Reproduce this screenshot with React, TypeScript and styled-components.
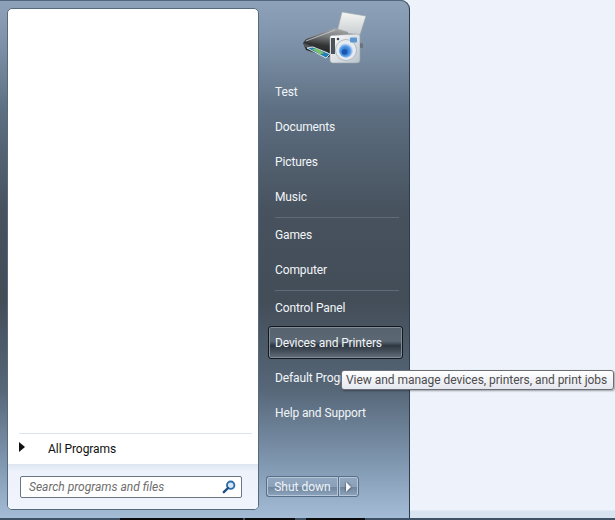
import React from "react";
import styled, { createGlobalStyle } from "styled-components";

const Global = createGlobalStyle`
  html, body { margin: 0; padding: 0; width: 615px; height: 520px; overflow: hidden; background: #edf2fb; }
  body { font-family: Roboto, "Noto Sans", sans-serif; font-size: 12px; }
`;

const Page = styled.div`
  width: 615px;
  height: 520px;
  display: flex;
  flex-direction: column;
  position: relative;
  overflow: hidden;
`;

const Desktop = styled.div`
  height: 518px;
  display: flex;
  background: linear-gradient(#edf2fb 0, #edf2fb 510px, #d9e4f1 511px, #d9e4f1 100%);
`;

const TaskStrip = styled.div`
  height: 2px;
  background: #3f5266;
  display: flex;
  padding-left: 120px;
  gap: 2px;
`;

const StripPiece = styled.div<{ $w: number; $gap?: number }>`
  width: ${(p) => p.$w}px;
  margin-right: ${(p) => p.$gap ?? 0}px;
  height: 2px;
  background: #0c0c0c;
`;

const Menu = styled.div`
  width: 410px;
  height: 518px;
  box-sizing: border-box;
  border-right: 1px solid #2c3d50;
  border-top-right-radius: 9px;
  padding: 8px 0 8px 7px;
  display: flex;
  box-shadow: inset 0 1px 0 #55677a;
  background: linear-gradient(#8ea3ba 0, #7f94ab 40px, #5d6f82 110px, #47525e 210px, #434d58 300px, #566778 390px, #7e95ae 460px, #a5bcd7 518px);
`;

const LeftPanel = styled.div`
  width: 252px;
  box-sizing: border-box;
  border: 1px solid #56697d;
  border-radius: 5px;
  background: #fff;
  display: flex;
  flex-direction: column;
  overflow: hidden;
`;

const ProgramList = styled.div`
  flex: 1;
`;

const AllPrograms = styled.div`
  margin: 0 6px 0 11px;
  height: 31px;
  border-top: 1px solid #dbe4ee;
  display: flex;
  align-items: center;
  color: #111;
  padding-left: 29px;
  position: relative;
  box-sizing: border-box;
  letter-spacing: -0.05px;
`;

const Arrow = styled.span`
  position: absolute;
  left: 0;
  top: 8px;
  width: 0;
  height: 0;
  border-left: 6px solid #111;
  border-top: 5.5px solid transparent;
  border-bottom: 5.5px solid transparent;
`;

const SearchArea = styled.div`
  height: 45px;
  box-sizing: border-box;
  padding: 12px 16px 0 12px;
  background: linear-gradient(#dde6f1 0, #eef3fb 8px, #f0f4fc 100%);
`;

const SearchBox = styled.div`
  height: 22px;
  box-sizing: border-box;
  border: 1px solid #6a7683;
  border-radius: 2px;
  background: #fff;
  display: flex;
  align-items: center;
  justify-content: space-between;
  padding: 0 5px 0 8px;
  color: #6d6d6d;
  font-style: italic;
`;

const RightColumn = styled.div`
  flex: 1;
  display: flex;
  flex-direction: column;
  padding: 0 6px 0 10px;
  color: #f2f5f8;
`;

const Picture = styled.div`
  height: 68px;
  padding-left: 33px;
  flex-shrink: 0;
`;

const Items = styled.div`
  display: flex;
  flex-direction: column;
  letter-spacing: -0.12px;
`;

const Item = styled.div<{ $active?: boolean }>`
  height: 31px;
  margin-bottom: 4px;
  display: flex;
  align-items: center;
  padding-left: 6px;
  box-sizing: border-box;
  border-radius: 3px;
  ${(p) =>
    p.$active &&
    `
    height: 33px;
    margin: -1px 0 3px -1px;
    border: 1px solid #14181d;
    box-shadow: inset 0 0 0 1px #7f8c99;
    background: linear-gradient(#56626e 0, #5b6773 46%, #2f3842 60%, #3c4651 72%, #626e7b 100%);
  `}
`;

const Separator = styled.div`
  height: 1px;
  margin: 0 4px 2px 6px;
  background: #5f6b78;
  transform: translateY(1px);
`;

const Spacer = styled.div`
  flex: 1;
`;

const ShutRow = styled.div`
  display: flex;
  margin-bottom: 13px;
  margin-left: -3px;
  height: 21px;
`;

const ShutButton = styled.div`
  width: 72px;
  box-sizing: border-box;
  border: 1px solid #5a6f86;
  border-right: none;
  border-radius: 3px 0 0 3px;
  color: #eef3f8;
  display: flex;
  align-items: center;
  justify-content: center;
  background: linear-gradient(#93a8c0 0, #8ba1ba 50%, #6f859d 52%, #8ea5bf 100%);
  box-shadow: inset 0 0 0 1px #b5c6d8;
`;

const ShutArrow = styled.div`
  width: 21px;
  box-sizing: border-box;
  border: 1px solid #5a6f86;
  border-radius: 0 3px 3px 0;
  display: flex;
  align-items: center;
  justify-content: center;
  background: linear-gradient(#93a8c0 0, #8ba1ba 50%, #6f859d 52%, #8ea5bf 100%);
  box-shadow: inset 0 0 0 1px #b5c6d8;
`;

const ShutGlyph = styled.span`
  width: 0;
  height: 0;
  border-left: 5px solid #f4f6f8;
  border-top: 5px solid transparent;
  border-bottom: 5px solid transparent;
  filter: drop-shadow(0 0 1px #333);
`;

const Tooltip = styled.div`
  position: absolute;
  left: 341px;
  top: 370px;
  width: 273px;
  height: 20px;
  box-sizing: border-box;
  border: 1px solid #6b6f75;
  border-radius: 3px;
  background: linear-gradient(#fff, #e5e7f0);
  color: #4c4c4c;
  display: flex;
  align-items: center;
  padding-left: 4px;
  white-space: nowrap;
  letter-spacing: -0.04px;
  box-shadow: 1px 1px 2px rgba(0, 0, 0, 0.35);
`;

const SearchIcon = () => (
  <svg width="14" height="14" viewBox="0 0 14 14">
    <circle cx="8.7" cy="5.2" r="3.7" fill="#d4e6f7" stroke="#2f6da8" strokeWidth="1.9" />
    <path d="M6 8 L1.8 12.2" stroke="#1d4f86" strokeWidth="2.4" strokeLinecap="round" />
  </svg>
);

const DeviceIcon = () => (
  <svg width="64" height="58" viewBox="0 1 64 58">
    <defs>
      <linearGradient id="prn" x1="0.6" y1="0" x2="0.4" y2="1">
        <stop offset="0" stopColor="#a4a6a7" />
        <stop offset="0.3" stopColor="#77797a" />
        <stop offset="0.6" stopColor="#323334" />
        <stop offset="1" stopColor="#1f1f20" />
      </linearGradient>
      <linearGradient id="paper" x1="0" y1="0" x2="0" y2="1">
        <stop offset="0" stopColor="#f4f5f4" />
        <stop offset="1" stopColor="#c8cdd0" />
      </linearGradient>
      <linearGradient id="cam" x1="0" y1="0" x2="1" y2="1">
        <stop offset="0" stopColor="#ffffff" />
        <stop offset="1" stopColor="#b9c3cc" />
      </linearGradient>
      <radialGradient id="lens" cx="0.45" cy="0.55" r="0.55">
        <stop offset="0" stopColor="#1f63c2" />
        <stop offset="0.6" stopColor="#4d94e4" />
        <stop offset="1" stopColor="#d8e7f6" />
      </radialGradient>
    </defs>
    <path d="M40 5 L64 9 L58 28 L35 25 Z" fill="url(#paper)" stroke="#9aa1a6" strokeWidth="0.6" />
    <path d="M1 36 L4 32 L33 21 L46 25 L46 42 L26 50 L4 43 Z" fill="url(#prn)" />
    <path d="M4 34 L33 23" stroke="#c9cdd0" strokeWidth="0.8" fill="none" />
    <path d="M1 36 L26 45 L26 48 L3 40 Z" fill="#55585b" />
    <path d="M5 41 L11 40 L28 47 L24 51 Z" fill="#1f7fb0" stroke="#e4ecef" strokeWidth="0.9" />
    <path d="M10 42 L15 41.5 L22 46 L18 47.5 Z" fill="#7fc06a" />
    <path d="M28 30 Q28 28.5 30 28.4 L55 27 Q58 27 58 29 L58 53 Q58 56 55 56 L31 56 Q28 56 28 53 Z" fill="url(#cam)" stroke="#98a2ab" strokeWidth="0.6" />
    <rect x="29" y="31" width="4" height="16" fill="#4c5358" />
    <circle cx="44" cy="43" r="10.5" fill="#e6ebf0" stroke="#a5afb8" strokeWidth="0.8" />
    <circle cx="44" cy="43.5" r="7.2" fill="url(#lens)" />
    <circle cx="42.5" cy="45" r="2.8" fill="#1857b0" />
    <rect x="48" y="30.5" width="7" height="5" rx="1" fill="#5d97d2" />
    <circle cx="36" cy="32" r="1.3" fill="#3d4348" />
    <path d="M58 36 L61 36.5 L61 41 L58 41 Z" fill="#6c747b" />
  </svg>
);

const top = ["Test", "Documents", "Pictures", "Music"];
const mid = ["Games", "Computer"];
const bottom = ["Control Panel", "Devices and Printers", "Default Programs", "Help and Support"];

export default function App() {
  return (
    <Page>
      <Global />
      <Desktop>
        <Menu>
          <LeftPanel>
            <ProgramList />
            <AllPrograms>
              <Arrow />
              All Programs
            </AllPrograms>
            <SearchArea>
              <SearchBox>
                Search programs and files
                <SearchIcon />
              </SearchBox>
            </SearchArea>
          </LeftPanel>
          <RightColumn>
            <Picture>
              <DeviceIcon />
            </Picture>
            <Items>
              {top.map((t) => (
                <Item key={t}>{t}</Item>
              ))}
              <Separator />
              {mid.map((t) => (
                <Item key={t}>{t}</Item>
              ))}
              <Separator />
              {bottom.map((t) => (
                <Item key={t} $active={t === "Devices and Printers"}>
                  {t}
                </Item>
              ))}
            </Items>
            <Spacer />
            <ShutRow>
              <ShutButton>Shut down</ShutButton>
              <ShutArrow>
                <ShutGlyph />
              </ShutArrow>
            </ShutRow>
          </RightColumn>
        </Menu>
      </Desktop>
      <TaskStrip>
        <StripPiece $w={123} />
        <StripPiece $w={50} $gap={9} />
        <StripPiece $w={59} />
      </TaskStrip>
      <Tooltip>View and manage devices, printers, and print jobs</Tooltip>
    </Page>
  );
}
